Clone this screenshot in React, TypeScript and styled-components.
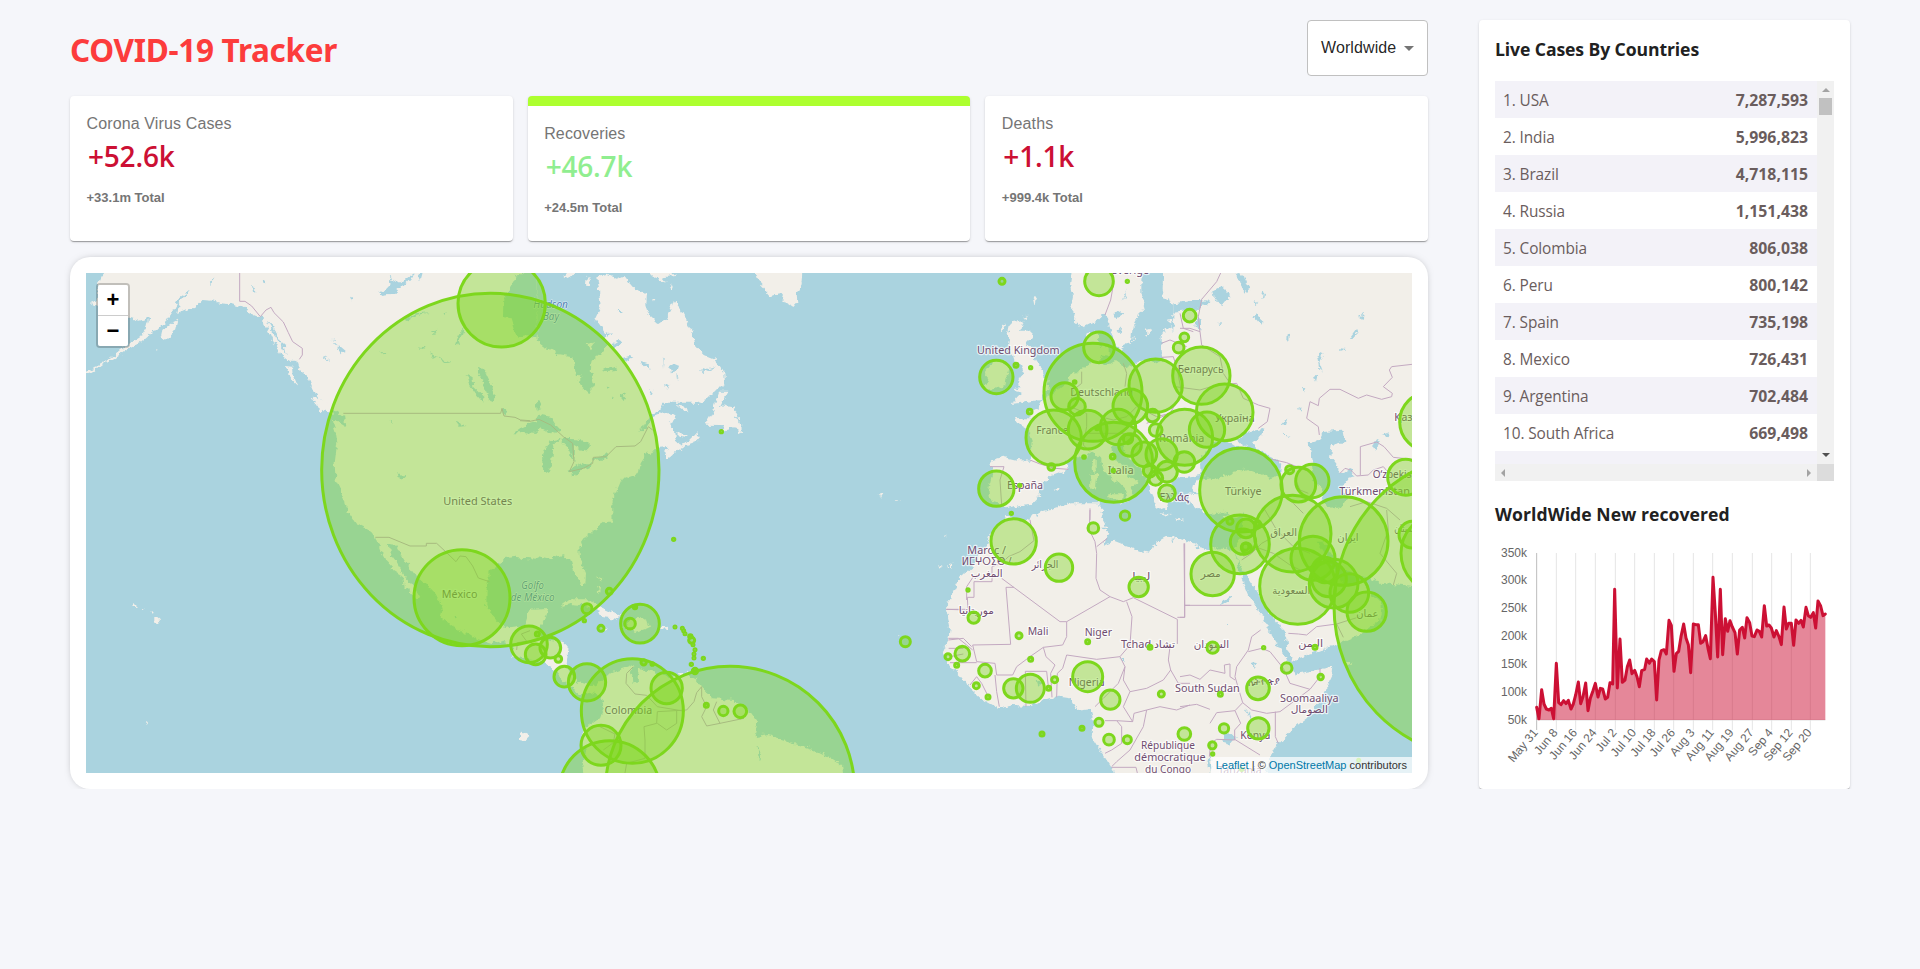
import React from 'react';
import styled, { createGlobalStyle, css } from 'styled-components';

const ui = "'Open Sans', 'Noto Sans', sans-serif";
const arial = "'Liberation Sans', Arial, sans-serif";

const GlobalStyle = createGlobalStyle`
  * { box-sizing: border-box; margin: 0; }
  body { margin: 0; background: #f5f6fa; font-family: ${ui}; }
`;

const paper = css`
  background: #fff;
  border-radius: 4px;
  box-shadow: 0 2px 1px -1px rgba(0, 0, 0, 0.2), 0 1px 1px 0 rgba(0, 0, 0, 0.14),
    0 1px 3px 0 rgba(0, 0, 0, 0.12);
`;

const Page = styled.div`
  display: flex;
  align-items: flex-start;
  padding: 20px 70px 0;
  gap: 51px;
`;
const Main = styled.main`
  width: 1358px;
`;
const Header = styled.header`
  display: flex;
  justify-content: space-between;
  align-items: flex-start;
  height: 76px;
`;
const Title = styled.h1`
  margin-top: 8px;
  color: #fc3c3c;
  font: 700 31.5px/44px 'Noto Sans', sans-serif;
  letter-spacing: -0.3px;
`;
const Select = styled.div`
  display: flex;
  align-items: center;
  justify-content: space-between;
  width: 121px;
  height: 56px;
  padding: 0 13px 0 13px;
  border: 1px solid #c0c0c0;
  border-radius: 4px;
  background: #fff;
  color: rgba(0, 0, 0, 0.87);
  font: 16px ${arial};
  letter-spacing: 0.1px;
`;
const Arrow = styled.i`
  border: 5px solid transparent;
  border-top-color: #757575;
  border-bottom: 0;
`;
const Stats = styled.section`
  display: flex;
  gap: 15px;
  height: 145px;
`;
const StatCard = styled.article<{ $selected?: boolean }>`
  ${paper}
  flex: 1;
  padding: 15.5px 16px 16px 16.5px;
  ${(p) => p.$selected && 'border-top: 10px solid greenyellow;'}
`;
const StatName = styled.p`
  color: #757575;
  font: 16px/24px ${arial};
  letter-spacing: 0.13px;
`;
const StatValue = styled.h2<{ $good?: boolean }>`
  margin: 2px 0 15px 1.5px;
  color: ${(p) => (p.$good ? 'lightgreen' : '#cc1034')};
  font: 600 28px/36px ${ui};
  letter-spacing: -0.2px;
`;
const StatTotal = styled.p`
  color: #757575;
  font: 700 13px/18px ${arial};
  letter-spacing: 0;
`;
const MapCard = styled.section`
  margin-top: 16px;
  height: 532px;
  padding: 16px;
  border-radius: 20px;
  background: #fff;
  box-shadow: 0 0 8px -4px rgba(0, 0, 0, 0.5);
`;
const MapView = styled.div`
  position: relative;
  height: 500px;
  overflow: hidden;
  background: #aad3df;
  svg { display: block; }
`;
const ZoomControl = styled.div`
  position: absolute;
  top: 10px;
  left: 10px;
  width: 34px;
  border: 2px solid rgba(0, 0, 0, 0.2);
  border-radius: 4px;
  background-clip: padding-box;
`;
const ZoomButton = styled.button`
  display: flex;
  align-items: center;
  justify-content: center;
  width: 30px;
  height: 30px;
  padding: 0;
  border: 0;
  background: #fff;
  color: #000;
  border-radius: 0 0 2px 2px;
  font: 700 22px/30px ${arial};
  &:first-child {
    height: 31px;
    border-bottom: 1px solid #ccc;
    border-radius: 2px 2px 0 0;
  }
`;
const Attribution = styled.div`
  position: absolute;
  right: 0;
  bottom: 0;
  height: 16px;
  padding: 0 5px;
  background: rgba(255, 255, 255, 0.7);
  color: #333;
  font: 11px/16px ${arial};
  b { font-weight: 400; color: #0078a8; }
`;
const Side = styled.aside`
  ${paper}
  width: 371px;
  height: 769px;
  padding: 16px;
`;
const SideTitle = styled.h3<{ $chart?: boolean }>`
  margin-top: ${(p) => (p.$chart ? '19px' : '-1px')};
  height: ${(p) => (p.$chart ? '45px' : '46px')};
  color: #212121;
  font: 700 17.6px/28px ${ui};
  letter-spacing: ${(p) => (p.$chart ? '0.05px' : '-0.1px')};
`;
const TableFrame = styled.div`
  display: grid;
  grid-template: 383px 17px / 322px 17px;
`;
const Rows = styled.div`
  overflow: hidden;
  color: #6a5d5d;
`;
const Row = styled.div`
  display: flex;
  justify-content: space-between;
  align-items: center;
  height: 37px;
  padding: 1px 9px 0 8px;
  font-size: 15.4px;
  letter-spacing: -0.1px;
  &:nth-of-type(odd) { background: #f3f2f8; }
  b { font-size: 15.8px; letter-spacing: 0; }
`;
const ScrollBar = styled.div<{ $vertical?: boolean }>`
  display: flex;
  flex-direction: ${(p) => (p.$vertical ? 'column' : 'row')};
  align-items: center;
  justify-content: space-between;
  padding: ${(p) => (p.$vertical ? '7px 0' : '0 6px')};
  background: #f1f1f1;
`;
const Thumb = styled.div`
  width: 13px;
  height: 17px;
  margin: 6px 0 auto;
  background: #c1c1c1;
`;
const Corner = styled.div`
  background: #dcdcdc;
`;
const Caret = styled.i<{ $to: 'up' | 'down' | 'left' | 'right' }>`
  border: 4px solid transparent;
  ${(p) => p.$to === 'up' && 'border-top: 0; border-bottom-color: #a3a3a3;'}
  ${(p) => p.$to === 'down' && 'border-bottom: 0; border-top-color: #505050;'}
  ${(p) => p.$to === 'left' && 'border-left: 0; border-right-color: #a3a3a3;'}
  ${(p) => p.$to === 'right' && 'border-right: 0; border-left-color: #a3a3a3;'}
`;

type Label = [text: string, x: number, y: number, width: number, kind?: 'sea'];
type Disc = [x: number, y: number, rx: number, ry?: number];
interface Tile {
  x: number;
  y: number;
  land: string[];
  water?: string[];
  borders?: string[];
  labels?: Label[];
  discs: Disc[];
}

/* Map tiles: every tile has its own origin and is drawn at three units per pixel. */
const tiles: Tile[] = [
  {
    x: -16, y: -23,
    land: [
      '110,20 103,69 92,82 84,100 80,150 60,158 78,168 120,190 185,205 208,212 235,205 228,235 214,258 180,280 150,300 112,330 85,345 62,360 45,366 45,376 66,368 100,342 108,338 140,320 178,294 208,280 250,242 262,240 290,210 308,182 330,142 362,120 346,138 326,162 322,192 350,180 385,163 398,150 425,152 450,160 480,162 515,172 545,190 572,200 590,230 606,266 630,312 655,332 682,332 690,360 716,385 735,430 762,460 785,476 822,500 826,528 812,520 800,508 785,508 797,545 802,575 794,640 797,695 822,748 860,815 1400,815 1400,20',
      '725,440 745,443 780,468 786,494 765,487 742,467', '645,348 666,350 668,376 682,408 655,380',
      '275,262 280,240 300,222 322,212 316,236 302,254 284,270',
      '255,185 275,180 290,172 275,184', '258,296 262,294 261,300',
      '640,300 655,312 660,332 648,320', '600,240 615,252 632,290 616,280',
    ],
    water: [
      '1400,50 1360,66 1340,80 1325,105 1311,122 1300,150 1299,205 1325,208 1335,240 1342,260 1372,256 1400,262',
      '925,128 945,118 962,100 956,80 985,98 1010,88 1040,68 1012,100 990,115 975,130 935,135',
      '1005,210 1040,190 1080,186 1040,196 1012,214', '1158,282 1170,245 1185,230 1175,262 1160,286',
      '1220,355 1242,356 1260,395 1272,425 1268,455 1256,446 1240,405', '1190,375 1208,385 1210,412 1240,440 1240,458 1215,430 1202,410',
      '1380,518 1343,548 1400,552 1400,516', '783,265 802,288 815,310 830,305 800,280', '930,305 955,310 940,314',
      '985,665 1003,680 1000,690 990,686', '1155,512 1170,522 1190,528 1168,530', '840,140 852,145 845,152', '758,318 780,332 770,334',
      '1085,245 1105,240 1095,256', '1050,290 1068,292 1056,298', '1080,310 1100,320 1090,326', '590,215 605,228 628,262 645,292 650,315 632,285 610,250',
      '420,95 430,82 422,110', '545,100 556,125 550,128', '580,90 588,92 584,100', '1120,190 1130,192 1124,200', '1100,322 1140,335 1120,336',
      '962,514 968,514 966,522', '1296,480 1304,474 1308,492 1298,494', '1045,70 1060,60 1052,90',
    ],
    borders: [
      '509,69 509,154 525,154 545,168 571,200 588,180 603,172 612,188 640,216 655,248 668,275 697,295 697,315 688,328',
      '820,490 1292,490 1296,475 1302,498 1335,502 1352,510 1380,512',
    ],
    labels: [['United States', 1223, 765, 207]],
    discs: [[1261, 660, 506, 530], [1295, 160, 131]],
  },
  {
    x: -16, y: 237,
    land: [
      '825,-20 836,5 860,42 900,62 918,84 930,118 945,145 970,172 958,176 1000,202 1004,234 1022,246 1042,270 1050,262 1030,228 1004,196 985,162 960,128 956,102 978,104 990,130 1010,162 1040,200 1068,225 1092,248 1110,272 1118,300 1112,320 1150,350 1195,370 1225,390 1262,402 1300,392 1322,402 1345,425 1390,445 1390,298 1375,305 1372,330 1360,346 1302,354 1282,332 1262,308 1249,285 1250,235 1256,205 1255,185 1280,168 1300,145 1340,140 1390,150 1390,-20',
      '253,321 262,321 273,331 264,342 253,341', '215,292 225,296 219,301', '187,283 198,284 196,291 188,290', '240,306 254,308 252,314', '228,636 234,640 230,645',
      '1352,668 1362,670 1378,678 1366,690 1352,684',
    ],
    water: ['1152,318 1164,318 1160,322'],
    borders: ['916,82 957,82 1020,108 1069,108 1069,100 1100,100 1130,128 1158,155 1170,138 1188,140 1208,168 1225,204 1258,215', '1340,420 1342,398 1370,394 1354,372 1380,362'],
    labels: [['México', 1169, 264, 107]],
    discs: [[1176, 263, 144]],
  },
  {
    x: 434, y: -23,
    land: [
      '-20,255 22,258 40,264 75,290 112,312 160,320 168,380 188,412 208,430 222,405 212,362 215,332 245,310 258,290 258,252 226,205 242,172 236,110 232,82 262,74 290,86 310,78 346,120 378,130 376,160 386,195 415,222 440,204 452,180 462,148 480,172 500,210 516,240 522,285 548,315 590,332 613,370 615,405 580,425 560,445 540,458 430,458 415,485 395,490 360,540 400,500 440,485 465,490 468,508 448,520 462,545 468,572 488,590 450,600 440,588 420,590 414,602 382,610 362,640 357,670 305,688 288,728 276,760 278,815 -20,815',
      '600,425 622,425 600,468 640,475 652,490 648,505 662,515 666,545 655,550 650,530 630,528 618,545 605,525 556,524 575,492',
      '440,625 436,605 460,590 500,578 522,555 533,543 530,560 543,560 530,576 490,590 465,608 446,625',
      '466,465 492,470 512,487 490,484', '705,40 708,69 718,100 750,138 782,132 800,158 820,172 832,155 830,130 845,100 848,40',
      '378,60 400,82 440,98 428,82 465,78 440,60', '136,78 150,62 166,70 150,86', '200,80 212,84 210,105 198,104', '400,146 407,150 401,157', '450,100 461,112 458,118', '200,285 224,280 210,298', '165,380 180,375 188,388 172,388',
      '468,545 490,556 505,554 492,564 474,556', '1072,737 1090,734 1090,740', '1124,753 1138,755 1128,757', '1032,717 1036,717 1034,720',
    ],
    water: [
      '-20,550 0,535 50,512 60,494 92,500 104,520 122,540 98,552 74,538 40,532 10,550', '68,655 66,615 90,572 122,566 100,588 96,640 84,668 72,666',
      '120,566 170,568 202,580 205,606 182,598 165,588 163,640 152,608 142,588', '145,663 190,640 216,640 212,652 160,674', '216,622 262,612 266,626 222,632',
      '305,325 328,318 340,322 310,336', '360,332 385,340 392,356 370,348', '445,352 462,340 475,345 468,365 455,370', '540,362 585,348 560,362 545,370', '250,358 290,350 296,362 255,366',
      '268,288 296,270 306,280 280,294', '300,440 322,428 308,450', '48,460 58,456 62,474 50,478', '260,245 272,250 264,262', '430,320 434,322 432,355', '466,375 476,385 468,388', '292,180 308,180 304,186', '358,545 392,500 400,495 375,540', '260,410 275,412 268,418', '276,440 284,442 280,450', '392,418 398,420 396,432 388,430', '436,400 445,405 438,420',
    ],
    borders: ['0,512 30,514 57,508 92,525 130,560 158,580 162,635 148,665 190,655 218,640 220,622 258,620 288,590 345,588 362,575 385,530 398,540'],
    labels: [['Hudson', 92, 175, 104, 'sea'], ['Bay', 93, 211, 48, 'sea']],
    discs: [[604, 545, 3.5]],
  },
  {
    x: 434, y: 237,
    land: [
      '-20,-20 278,-20 272,20 250,40 200,78 178,110 180,145 198,190 196,222 184,222 165,190 152,150 128,136 95,145 55,135 25,148 -20,135',
      '-20,352 15,345 28,300 85,297 76,328 60,350 54,372 80,388 130,396 146,412 140,460 150,488 172,514 215,528 245,515 272,490 345,462 330,488 350,505 358,478 400,482 445,500 500,494 528,508 548,535 580,565 640,570 690,605 715,640 706,682 745,675 790,690 880,718 930,742 966,765 972,820 190,820 184,765 200,722 184,692 198,652 240,622 252,590 236,555 205,545 180,555 150,530 125,508 100,478 70,455 -20,440',
      '122,290 150,268 205,268 240,290 300,318 292,326 250,322 240,302 190,286 150,282', '296,352 320,350 326,326 365,328 400,350 375,356 345,366 330,355', '420,350 445,352 443,359 420,358', '232,352 264,358 255,362 234,358',
      '470,490 508,488 484,496', '224,198 250,206 246,212', '228,230 240,236 236,250', '0,672 22,680 12,692 0,690', '1258,162 1264,164 1262,178', '1282,168 1288,168 1284,174', '1272,78 1280,80 1276,82', '1134,375 1139,377 1136,382',
      '1380,120 1360,170 1330,205 1310,240 1280,298 1290,350 1286,390 1268,425 1290,465 1320,490 1350,535 1385,562 1400,562 1400,120',
    ],
    water: ['338,495 352,495 354,514 340,518', '710,705 722,735 722,752 712,740'],
    borders: ['340,470 320,490 318,520 345,552 380,556 412,590 495,604', '545,530 530,548 522,575 500,600 412,605 410,640 372,650 375,690 375,745 320,760 315,789', '545,530 545,560 560,590 545,620 560,648 600,640 672,625', '590,575 580,600 600,640', '240,650 285,672 280,698 250,720', '1280,298 1340,298', '1340,270 1340,230 1360,200', '1285,390 1330,385 1355,410', '412,640 440,660 470,640 470,602'],
    labels: [['Golfo', 38, 237, 68, 'sea'], ['de México', 38, 273, 132, 'sea'], ['Colombia', 325, 612, 143]],
    discs: [
      [630, 843, 374], [337, 603, 153, 157], [269, 843, 151], [243, 706, 60], [440, 534, 47], [201, 517, 56], [133, 500, 31], [115, 447, 10], [91, 413, 31], [47, 433, 31], [27, 403, 55],
      [52, 372, 6], [201, 296, 15], [193, 332, 3.5], [243, 355, 9], [268, 244, 9], [360, 341, 58], [330, 341, 16], [345, 291, 5], [465, 351, 3], [487, 355, 3], [491, 362, 3], [495, 371, 3],
      [511, 379, 5], [515, 391, 9], [519, 404, 3], [525, 419, 3], [522, 432, 3], [522, 444, 3], [550, 445, 3.5], [514, 463, 3.5], [525, 483, 8], [371, 457, 8], [397, 462, 4], [559, 586, 6],
      [610, 603, 14], [661, 604, 19], [461, 88, 3.5], [1156, 395, 15],
    ],
  },
  {
    x: 854, y: -13,
    land: [
      '400,0 390,75 396,110 390,140 404,160 402,182 432,202 470,182 494,160 504,172 512,210 525,255 545,272 552,255 572,250 578,200 596,165 620,132 604,100 604,60 614,0',
      '670,0 668,90 674,118 700,135 740,125 800,115 800,0',
      '800,145 760,145 715,155 708,172 722,182 724,210 716,222 700,212 695,196 675,210 665,225 665,270 672,300 640,312 612,300 580,312 555,325 525,300 500,315 480,300 488,270 474,240 480,215 465,215 438,228 434,260 440,290 450,312 425,332 400,335 385,365 340,400 298,425 292,445 265,458 272,475 250,475 225,474 232,492 262,508 278,545 272,602 232,600 190,590 150,602 158,635 145,690 152,726 178,730 196,748 240,738 272,735 300,706 296,682 335,648 385,630 378,605 405,590 425,595 455,572 480,595 492,632 530,668 552,680 562,708 552,730 575,715 582,695 572,680 598,668 570,650 545,620 518,588 514,560 530,545 548,556 555,585 598,625 625,665 628,690 650,735 678,752 684,730 664,705 700,700 690,668 720,652 800,640',
      '218,186 250,180 240,212 275,212 272,232 258,246 272,262 286,300 310,335 312,352 326,362 320,395 300,420 262,425 215,432 232,410 250,400 222,392 236,375 240,352 252,335 245,310 225,305 218,285 206,262 210,240 200,225 206,200',
      '145,320 170,300 192,304 205,325 196,375 140,392 132,380 145,355 132,340', '278,110 290,104 284,136', '180,195 196,190 184,215', '250,170 262,166 258,174',
      '452,642 472,640 468,686 450,682', '456,605 470,598 470,628 460,636', '505,700 552,700 548,730 505,712', '342,688 356,682 352,694', '295,712 304,706 302,714',
      '450,270 462,268 462,290 452,288', '478,262 506,256 506,292 480,286', '618,210 634,205 620,234', '578,230 584,228 580,245',
      '230,800 265,778 310,752 430,738 488,740 480,765 500,800', '655,760 700,762 680,768', '682,182 700,180 692,190', '740,700 790,704 800,720 790,760 745,720',
    ],
    water: ['520,165 535,150 550,160 530,178', '600,270 578,280 560,270 570,262', '560,85 556,110 548,125 556,98', '530,215 545,200 538,220', '760,120 780,120 780,150 740,148 720,150', '270,200 262,208 276,206'],
    borders: ['520,39 520,75 512,120 495,165', '425,335 425,370 400,390 390,440 440,460 440,500 430,555 450,575', '270,600 300,612 345,625 385,628', '150,620 192,620 180,660 185,735', '550,310 560,340 555,380', '720,160 730,205 760,215', '664,250 690,240 740,260', '664,292 700,290 712,330 725,400 690,460 650,470 590,440', '590,440 560,470 520,480 480,470', '620,490 690,460', '450,780 450,745', '440,520 500,520 560,520'],
    labels: [['Sverige', 571, 42, 112], ['United Kingdom', 235, 281, 248], ['Deutschland', 485, 409, 188], ['France', 337, 521, 96], ['España', 255, 686, 108], ['Italia', 542, 641, 78], ['România', 725, 547, 136], ['Ελλάς', 703, 724, 90]],
    discs: [
      [186, 64, 9], [477, 64, 43], [562, 64, 3.5], [477, 262, 46], [749, 167, 19], [733, 232, 13], [716, 263, 16], [459, 397, 147], [169, 351, 50], [228, 316, 6], [272, 323, 3.5], [404, 366, 4],
      [374, 409, 41], [411, 440, 25], [269, 455, 7], [341, 533, 83], [647, 377, 80], [571, 439, 52], [534, 501, 53], [443, 509, 58], [471, 505, 4], [564, 537, 14], [521, 607, 117, 120],
      [570, 555, 34], [613, 583, 37], [638, 467, 19], [647, 510, 19], [734, 532, 84], [665, 583, 47], [733, 606, 31], [681, 635, 31], [647, 655, 21], [629, 632, 19], [681, 699, 25], [334, 621, 10],
      [432, 591, 4], [518, 590, 7], [520, 632, 3.5], [555, 767, 14], [169, 686, 53], [239, 676, 3.5], [214, 760, 3.5],
    ],
  },
  {
    x: 1094, y: -13,
    land: ['-20,0 720,0 720,820 235,820 230,752 205,755 165,775 130,752 90,762 62,735 50,700 36,680 50,660 90,655 60,640 40,648 -20,655'],
    water: [
      '-20,130 30,124 80,118 88,132 60,140 40,148 -20,155', '100,90 122,78 145,100 148,118 120,135 104,115', '170,39 195,52 208,90 196,100 180,70', '220,170 230,165 250,182 248,195 232,186', '112,188 126,186 120,196', '52,168 62,180 58,215 50,196',
      '60,612 88,555 120,540 150,548 175,565 200,562 172,542 200,515 255,506 240,530 215,548 240,572 285,595 304,612 300,645 270,655 235,640 200,628 160,635 130,650 100,660 62,640',
      '386,550 420,538 430,516 490,512 496,545 455,556 450,590 470,615 482,640 512,630 522,652 498,660 486,690 508,715 490,738 440,745 425,715 428,690 400,660 400,610',
      '580,560 588,540 600,545 584,572', '605,525 630,516 625,532', '412,290 430,280 418,310 428,335 418,330', '510,235 528,210 534,218 515,240', '538,175 552,155 548,180', '480,265 505,268 482,272', '305,495 328,470 318,498', '305,515 332,534 310,524', '320,220 326,218 325,243 319,236', '368,385 376,384 370,400', '355,440 362,440 358,460', '220,125 235,124 230,132', '245,115 250,90 254,94 248,120', '402,350 412,348 408,365',
    ],
    borders: ['122,39 110,65 65,118 55,170 60,215 30,205 0,205', '60,215 65,255 120,290 130,340 150,370', '-15,380 60,390 110,375 170,370 190,415 235,435 270,445 262,485 235,505', '418,525 415,500 380,475 390,425 415,437 418,415 450,388 480,388 535,415 560,405 605,418 635,410 637,400 610,380 637,352 628,330 635,320 696,313', '541,645 541,560 590,546 612,560 640,592 696,598', '530,648 565,645 580,630 610,620 640,655', '480,640 495,625 512,630 530,648', '272,597 320,608 400,640', '305,700 340,730 370,760', '345,655 360,690 385,700', '510,740 560,725 620,745 660,780'],
    labels: [['Беларусь', 62, 340, 138], ['Україна', 164, 486, 120], ['Türkiye', 190, 706, 110], ['Қазақстан', 722, 482, 158], ['O‘zbekiston', 660, 653, 164], ['Türkmenistan', 584, 706, 212]],
    discs: [[64, 347, 86], [134, 457, 85], [81, 509, 53], [183, 690, 124, 126], [329, 629, 12], [355, 674, 52], [397, 663, 50], [747, 485, 88], [677, 652, 54]],
  },
  {
    x: 844, y: 237,
    land: [
      '228,18 262,28 300,35 340,8 380,-5 420,-20 510,-20 500,22 512,48 535,72 520,105 552,92 592,108 625,122 662,128 678,98 712,80 750,85 800,102 800,820 560,820 548,778 520,735 500,705 485,680 492,640 480,595 438,600 420,565 390,560 345,568 300,588 250,585 205,597 160,572 120,535 92,498 62,470 40,425 55,390 62,345 48,298 70,245 95,195 130,168 165,120 180,75 200,45 222,35',
      '60,165 70,163 66,178', '30,168 38,170 34,176', '510,12 522,0 516,-12', '735,25 758,30 744,34',
    ],
    water: ['574,450 582,440 584,458', '320,515 335,520 325,530', '720,90 735,86 728,96'],
    borders: [
      '300,30 312,92 270,125 235,140 215,160 186,170 186,215 132,215 132,262 112,262 114,300 48,298', '215,205 390,335 410,335 410,380 398,405 340,412 300,440 260,470 248,495 200,495 195,460 140,455 128,405 242,403 228,232 252,232',
      '410,335 540,260 510,240 498,205 500,130 495,95 478,60 480,0', '500,110 532,85', '540,260 580,275 610,263 742,328 742,402', '742,322 764,322 764,100', '764,286 780,286', '590,275 606,320 600,405 570,440 500,448 410,435 398,475 382,490 380,562', '340,412 348,440 375,465 362,490 366,562', '286,484 350,484 355,530', '286,484 288,590', '570,440 585,470 565,520 520,565 495,590', '585,470 580,510 600,545 580,590 608,635 560,632 525,632', '600,545 650,535 700,510 722,480 715,450 720,410', '608,635 612,610 650,600 690,590 740,600 780,585', '560,632 575,650 575,700 545,720 525,730', '650,600 640,650 600,720 560,755 545,770', '545,772 618,772 622,789', '55,385 85,385 110,405 128,420', '56,415 100,415', '60,440 100,432', '60,458 140,458', '722,480 745,520 780,520', '120,525 140,500 155,520 175,560', '195,495 200,545 208,590'],
    labels: [['Maroc /', 170, 131, 116], ['ⵍⵎⵖⵔⵉⴱ /', 170, 166, 150], ['المغرب', 170, 200, 96], ['الجزائر', 345, 175, 80], ['ليبيا', 634, 211, 54], ['موريتانيا', 139, 313, 106], ['Mali', 324, 376, 62], ['Niger', 505, 377, 82], ['Tchad تشاد', 654, 414, 162], ['Nigeria', 470, 529, 108], ['République', 714, 718, 162], ['démocratique', 720, 754, 214], ['du Congo', 714, 789, 138]],
    discs: [
      [251, 94, 68], [387, 173, 41], [490, 54, 16], [626, 231, 29], [114, 240, 3.5], [131, 323, 17], [267, 377, 9], [473, 395, 6], [660, 412, 6], [97, 431, 22], [54, 440, 9], [80, 466, 6],
      [165, 482, 19], [139, 527, 9], [174, 561, 6], [250, 535, 29], [301, 535, 42], [302, 448, 6], [356, 535, 6], [374, 509, 9], [473, 500, 45], [541, 569, 29], [694, 552, 9], [507, 637, 12], [456, 655, 6],
      [537, 689, 16], [592, 689, 12], [336, 672, 6],
    ],
  },
  {
    x: 1094, y: 237,
    land: [
      '-20,92 20,98 45,112 80,120 120,112 160,120 172,150 180,195 195,225 210,262 238,300 262,355 290,400 315,440 330,462 345,492 400,482 460,468 458,495 425,565 380,625 340,655 290,705 268,745 255,820 -20,820',
      '190,-30 188,40 180,85 160,120 182,165 200,195 232,245 262,300 300,345 318,380 322,420 335,452 400,430 470,402 540,372 600,330 612,290 565,245 552,200 528,225 490,218 468,190 440,140 410,95 430,95 460,140 480,175 530,192 552,200 600,218 720,230 720,-30',
      '128,22 160,12 150,30 132,34', '494,456 515,456 505,462',
    ],
    water: ['134,672 162,668 164,690 150,708 128,702', '196,595 205,605 218,632 205,615', '218,460 228,462 220,474', '118,285 132,268 150,258 155,264 128,282', '134,340 140,338 136,346', '88,735 95,770 90,789 84,760'],
    borders: [
      '12,100 14,286 14,322 0,322', '14,286 214,286', '242,360 215,380 205,420 170,470 165,500 188,578 165,602 110,608 90,640', '205,425 245,415 270,425 310,475', '310,475 330,520 390,538 420,500 420,475', '390,538 300,605 260,610 215,600 188,578', '286,605 286,680 295,700', '0,500 30,495 60,508 90,480 135,490 133,465 150,462 150,500 165,510', '0,590 50,583 90,598', '165,602 182,640 164,660 164,690 110,688 92,700 88,740', '164,688 240,735', '325,370 355,372 380,375 410,350 470,342', '470,342 490,382', '470,342 540,320', '225,110 280,130 330,165 370,185', '185,150 215,130 245,100 300,70', '255,0 290,60 340,110 390,130', '620,0 625,60 600,130 650,190 640,225', '188,100 192,140'],
    labels: [['العراق', 311, 78, 80], ['ایران', 504, 92, 64], ['افغانستان', 690, 65, 94], ['مصر', 92, 200, 60], ['السعودية', 334, 252, 114], ['عمان', 562, 320, 66], ['السودان', 94, 413, 106], ['اليمن', 392, 412, 74], ['ኢትዮጵያ', 251, 526, 96], ['South Sudan', 82, 547, 194], ['Soomaaliya', 388, 576, 176], ['الصومال', 388, 610, 112], ['Kenya', 226, 686, 90], ['Tanzania', 180, 792, 130]],
    discs: [
      [900, 288, 438, 454], [338, 71, 115], [491, 93, 133], [180, 103, 88], [98, 192, 65], [198, 55, 28], [150, 34, 9], [233, 40, 8], [189, 95, 38], [199, 114, 15], [196, 110, 11], [399, 145, 66],
      [353, 229, 114], [447, 208, 52], [461, 221, 73], [434, 180, 38], [508, 249, 58], [560, 305, 59], [405, 412, 6], [697, 74, 40], [782, 130, 119], [98, 413, 17], [251, 413, 3.5], [320, 474, 16],
      [422, 501, 8], [234, 535, 34], [121, 553, 6], [132, 655, 14], [235, 655, 32], [97, 706, 11], [98, 732, 3.5], [13, 672, 19], [536, 751, 3], [185, 778, 3.5],
    ],
  },
];

const at = (t: Tile) => `translate(${t.x} ${t.y}) scale(.33333)`;

const WorldMap = () => (
  <svg width="1326" height="500" viewBox="0 0 1326 500">
    <defs>
      <filter id="coast" x="0" y="0" width="1326" height="500" filterUnits="userSpaceOnUse" colorInterpolationFilters="sRGB">
        <feTurbulence type="fractalNoise" baseFrequency="0.16" numOctaves="3" seed="4" />
        <feDisplacementMap in="SourceGraphic" scale="7" xChannelSelector="R" yChannelSelector="G" />
      </filter>
    </defs>
    <g filter="url(#coast)">
      <rect x="-20" y="-20" width="1366" height="540" fill="#aad3df" />
      {tiles.map((t, i) => (
        <g key={i} transform={at(t)} fill="#f2efe9">
          {t.land.map((p, k) => <polygon key={k} points={p} />)}
        </g>
      ))}
      {tiles.map((t, i) => (
        <g key={i} transform={at(t)} fill="#aad3df">
          {t.water?.map((p, k) => <polygon key={k} points={p} />)}
        </g>
      ))}
    </g>
    {tiles.map((t, i) => (
      <g key={i} transform={at(t)} fill="none" stroke="#c3a9c1" strokeWidth="3" strokeLinejoin="round">
        {t.borders?.map((p, k) => <polyline key={k} points={p} />)}
      </g>
    ))}
    {tiles.map((t, i) => (
      <g key={i} transform={at(t)} fontFamily="'Noto Sans', 'DejaVu Sans', sans-serif" fontSize="31" textAnchor="middle">
        {t.labels?.map(([text, x, y, w, kind]) => (
          <text key={text} x={x} y={y} textLength={w} lengthAdjust="spacingAndGlyphs" fill={kind ? '#4d80b3' : '#704d70'} fontStyle={kind ? 'italic' : 'normal'} stroke="#fff" strokeOpacity=".7" strokeWidth={kind ? 3 : 7} strokeLinejoin="round" paintOrder="stroke">
            {text}
          </text>
        ))}
      </g>
    ))}
    {tiles.map((t, i) => (
      <g key={i} transform={at(t)} fill="#7dd71d" fillOpacity=".4" stroke="#7dd71d" strokeWidth="9">
        {t.discs.map(([x, y, rx, ry], k) => <ellipse key={k} cx={x} cy={y} rx={rx} ry={ry ?? rx} />)}
      </g>
    ))}
  </svg>
);

/* Chart coordinates: three units per pixel, 50k at y=720 and 350k at y=219. */
const line =
  '230,682 237,716 245,629 252,672 259,687 267,690 274,685 281,716 289,550 296,668 303,674 311,662 318,671 325,661 333,687 340,672 347,645 355,606 362,671 369,650 377,609 384,692 391,655 399,632 406,610 414,651 421,625 428,627 436,657 443,652 450,608 458,612 464,328 472,624 480,477 487,607 495,600 502,560 509,540 516,581 524,571 531,590 538,620 545,572 554,568 560,537 568,550 575,537 583,545 590,660 597,540 604,512 612,509 619,522 627,421 634,436 642,574 649,521 656,514 663,470 671,432 678,474 685,494 692,578 700,432 707,434 715,434 722,490 729,485 737,467 744,505 751,536 759,292 766,400 773,531 781,328 788,524 796,416 803,454 810,422 817,441 825,458 832,522 839,450 847,442 854,474 861,413 869,428 876,468 883,470 891,450 898,454 905,471 913,377 920,438 927,435 934,444 942,471 949,452 957,470 964,494 972,381 979,447 986,430 994,430 1001,496 1008,420 1016,430 1023,421 1030,441 1038,382 1045,407 1052,412 1060,398 1067,444 1074,363 1082,378 1089,407 1096,402';
const ticks: [number, string][] = [
  [230, 'May 31'], [289, 'Jun 8'], [347, 'Jun 16'], [406, 'Jun 24'], [466, 'Jul 2'], [524, 'Jul 10'], [583, 'Jul 18'], [641, 'Jul 26'],
  [700, 'Aug 3'], [758, 'Aug 11'], [817, 'Aug 19'], [877, 'Aug 27'], [935, 'Sep 4'], [994, 'Sep 12'], [1051, 'Sep 20'],
];

const Chart = () => (
  <svg width="339" height="224" viewBox="0 0 339 224">
    <g transform="translate(-35 -65) scale(.33333)" fontFamily="'Liberation Sans', Arial, sans-serif" fontSize="36" fill="#666">
      {ticks.map(([x], i) => <path key={x} d={`M${x} 219V750`} stroke={i ? '#e5e5e5' : '#bdbdbd'} strokeWidth="3" />)}
      <path d="M230 720H1096" stroke="#e0e0e0" strokeWidth="3" />
      {[350, 300, 250, 200, 150, 100, 50].map((v, i) => (
        <text key={v} x="201" y={230 + i * 83.5} textAnchor="end">{v}k</text>
      ))}
      <polygon points={`230,720 ${line} 1096,720`} fill="#cc1034" fillOpacity=".5" />
      <polyline points={line} fill="none" stroke="#cc1034" strokeWidth="9" strokeLinejoin="round" strokeLinecap="round" />
      {ticks.map(([x, label]) => (
        <text key={label} transform={`translate(${x + 6} 759) rotate(-50)`} textAnchor="end">{label}</text>
      ))}
    </g>
  </svg>
);

const stats = [
  { name: 'Corona Virus Cases', value: '+52.6k', total: '+33.1m Total' },
  { name: 'Recoveries', value: '+46.7k', total: '+24.5m Total', good: true },
  { name: 'Deaths', value: '+1.1k', total: '+999.4k Total' },
];
const countries = [
  ['USA', '7,287,593'], ['India', '5,996,823'], ['Brazil', '4,718,115'], ['Russia', '1,151,438'], ['Colombia', '806,038'],
  ['Peru', '800,142'], ['Spain', '735,198'], ['Mexico', '726,431'], ['Argentina', '702,484'], ['South Africa', '669,498'],
];

export default function App() {
  return (
    <Page>
      <GlobalStyle />
      <Main>
        <Header>
          <Title>COVID-19 Tracker</Title>
          <Select>Worldwide<Arrow /></Select>
        </Header>
        <Stats>
          {stats.map((s) => (
            <StatCard key={s.name} $selected={s.good}>
              <StatName>{s.name}</StatName>
              <StatValue $good={s.good}>{s.value}</StatValue>
              <StatTotal>{s.total}</StatTotal>
            </StatCard>
          ))}
        </Stats>
        <MapCard>
          <MapView>
            <WorldMap />
            <ZoomControl>
              <ZoomButton>+</ZoomButton>
              <ZoomButton>−</ZoomButton>
            </ZoomControl>
            <Attribution><b>Leaflet</b> | © <b>OpenStreetMap</b> contributors</Attribution>
          </MapView>
        </MapCard>
      </Main>
      <Side>
        <SideTitle>Live Cases By Countries</SideTitle>
        <TableFrame>
          <Rows>
            {countries.map(([name, cases], i) => (
              <Row key={name}><span>{i + 1}. {name}</span><b>{cases}</b></Row>
            ))}
            <Row />
          </Rows>
          <ScrollBar $vertical><Caret $to="up" /><Thumb /><Caret $to="down" /></ScrollBar>
          <ScrollBar><Caret $to="left" /><Caret $to="right" /></ScrollBar>
          <Corner />
        </TableFrame>
        <SideTitle $chart>WorldWide New recovered</SideTitle>
        <Chart />
      </Side>
    </Page>
  );
}
